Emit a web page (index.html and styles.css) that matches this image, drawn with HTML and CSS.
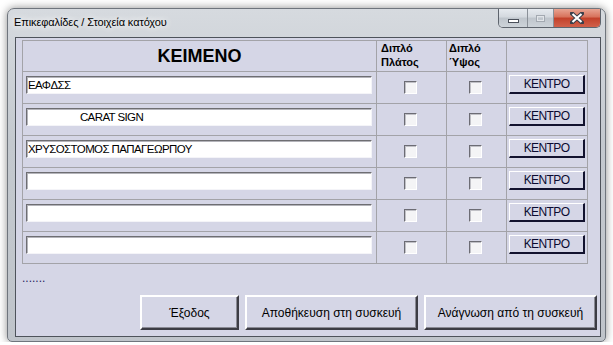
FILE: index.html
```html
<!DOCTYPE html>
<html lang="el">
<head>
    <meta charset="UTF-8">
    <title>Επικεφαλίδες / Στοιχεία κατόχου</title>
    <link rel="stylesheet" href="styles.css">
</head>
<body>
    <div class="window">
        <div class="titlebar">
            <span class="title">Επικεφαλίδες / Στοιχεία κατόχου</span>
            <div class="caption">
                <span class="cap cap-min"><i></i></span>
                <span class="cap cap-max"><i></i></span>
                <span class="cap cap-close">
                    <svg width="14" height="12" viewBox="0 0 14 12">
                        <path d="M2 1.5 L12 10.5 M12 1.5 L2 10.5" stroke="#3a3f4a" stroke-width="4.2" stroke-linecap="square"/>
                        <path d="M2.5 2 L11.5 10 M11.5 2 L2.5 10" stroke="#fff" stroke-width="2.2"/>
                    </svg>
                </span>
            </div>
        </div>

        <div class="client">
            <div class="grid">
                <div class="cell head-main">KEIMENO</div>
                <div class="cell head-small pad-w">Διπλό<br>Πλάτος</div>
                <div class="cell head-small pad-h">Διπλό<br>Ύψος</div>
                <div class="cell"></div>

                <div class="cell text-cell"><input class="field" type="text" value="ΕΑΦΔΣΣ"></div>
                <div class="cell check-cell"><span class="check"></span></div>
                <div class="cell check-cell"><span class="check"></span></div>
                <div class="cell btn-cell"><button class="center-btn">KENTPO</button></div>

                <div class="cell text-cell"><input class="field" type="text" value="                    CARAT SIGN"></div>
                <div class="cell check-cell"><span class="check"></span></div>
                <div class="cell check-cell"><span class="check"></span></div>
                <div class="cell btn-cell"><button class="center-btn">KENTPO</button></div>

                <div class="cell text-cell"><input class="field" type="text" value="ΧΡΥΣΟΣΤΟΜΟΣ ΠΑΠΑΓΕΩΡΠΟΥ"></div>
                <div class="cell check-cell"><span class="check"></span></div>
                <div class="cell check-cell"><span class="check"></span></div>
                <div class="cell btn-cell"><button class="center-btn">KENTPO</button></div>

                <div class="cell text-cell"><input class="field" type="text" value=""></div>
                <div class="cell check-cell"><span class="check"></span></div>
                <div class="cell check-cell"><span class="check"></span></div>
                <div class="cell btn-cell"><button class="center-btn">KENTPO</button></div>

                <div class="cell text-cell"><input class="field" type="text" value=""></div>
                <div class="cell check-cell"><span class="check"></span></div>
                <div class="cell check-cell"><span class="check"></span></div>
                <div class="cell btn-cell"><button class="center-btn">KENTPO</button></div>

                <div class="cell text-cell"><input class="field" type="text" value=""></div>
                <div class="cell check-cell"><span class="check"></span></div>
                <div class="cell check-cell"><span class="check"></span></div>
                <div class="cell btn-cell"><button class="center-btn">KENTPO</button></div>
            </div>

            <div class="dots">.......</div>

            <div class="actions">
                <button class="action-btn btn-exit">Έξοδος</button>
                <button class="action-btn btn-wide">Αποθήκευση στη συσκευή</button>
                <button class="action-btn btn-wide">Ανάγνωση από τη συσκευή</button>
            </div>
        </div>
    </div>
</body>
</html>
```

FILE: styles.css
```css
body {
    margin: 0;
    background: #ffffff;
    font-family: "Liberation Sans", Arial, sans-serif;
}
.window {
    box-sizing: border-box;
    width: 599px;
    height: 334px;
    margin: 8px 0 0 7px;
    padding: 0 4px 4px 7px;
    border: 1px solid #6f757d;
    border-radius: 7px 7px 5px 5px;
    background: linear-gradient(to bottom, #d6dadf 0%, #c4c9cf 40%, #bfc4ca 100%);
    box-shadow: 0 0 9px rgba(0, 0, 0, 0.45);
}
.titlebar {
    height: 28px;
    display: flex;
    align-items: flex-start;
}
.title {
    margin: 7px 0 0 -1px;
    font-family: "Liberation Sans", Arial, sans-serif;
    font-size: 11px;
    letter-spacing: -0.1px;
    color: #000;
    text-shadow: 0 0 6px #fff, 0 0 10px #fff;
}
.caption {
    margin-left: auto;
    display: flex;
    height: 18px;
    border: 1px solid #5e646d;
    border-top: none;
    border-radius: 0 0 5px 5px;
    overflow: hidden;
}
.cap {
    display: flex;
    align-items: center;
    justify-content: center;
    height: 18px;
}
.cap-min {
    width: 28px;
    border-right: 1px solid #8a9098;
    background: linear-gradient(to bottom, #e6eaef 0%, #d3d8de 45%, #bfc5cc 50%, #cdd3d9 100%);
}
.cap-min i {
    display: block;
    width: 9px;
    height: 2px;
    margin-top: 6px;
    background: #fff;
    border: 1px solid #4a505a;
}
.cap-max {
    width: 25px;
    border-right: 1px solid #8a9098;
    background: linear-gradient(to bottom, #e6eaef 0%, #d3d8de 45%, #bfc5cc 50%, #cdd3d9 100%);
}
.cap-max i {
    display: block;
    width: 7px;
    height: 5px;
    border: 1px solid #a3a9b1;
    box-shadow: inset 0 0 0 1px #e2e5e9;
}
.cap-close {
    width: 46px;
    background: linear-gradient(to bottom, #e8a492 0%, #d7715a 45%, #c2412a 50%, #d1604a 100%);
}
.client {
    box-sizing: border-box;
    height: 300px;
    padding: 2px 3px 0 6px;
    border: 1px solid #4e535b;
    background: #d5d6e6;
}
.grid {
    display: grid;
    grid-template-columns: 353px 69px 59px 80px;
    grid-template-rows: 30px repeat(6, 31px);
    gap: 1px;
    width: max-content;
    background: #a3a3a8;
    border: 1px solid #a3a3a8;
}
.cell {
    background: #d5d6e6;
    box-sizing: border-box;
}
.head-main {
    display: flex;
    align-items: center;
    justify-content: center;
    font-size: 18px;
    font-weight: bold;
    color: #000;
}
.head-small {
    font-size: 11px;
    font-weight: bold;
    line-height: 14px;
    color: #000;
}
.pad-w {
    padding-left: 4px;
}
.pad-h {
    padding-left: 2px;
}
.text-cell {
    padding: 4px 0 0 3px;
}
.field {
    box-sizing: border-box;
    display: block;
    width: 346px;
    height: 18px;
    margin: 0;
    padding: 0 1px;
    border: 1px solid;
    border-color: #6e6e72 #f4f4f8 #f4f4f8 #6e6e72;
    box-shadow: inset 1px 1px 0 #b4b4ba;
    background: #fff;
    font-family: "Liberation Sans", Arial, sans-serif;
    font-size: 11.5px;
    letter-spacing: -0.6px;
    color: #000;
    white-space: pre;
    outline: none;
}
.check-cell {
    display: flex;
    align-items: center;
    justify-content: center;
}
.check {
    box-sizing: border-box;
    display: block;
    width: 13px;
    height: 13px;
    margin-right: 2px;
    border: 1px solid;
    border-color: #6c6c74 #ffffff #ffffff #6c6c74;
    box-shadow: inset 1px 1px 0 #c0c0c6;
    background: #f4f4f6;
}
.btn-cell {
    padding: 3px 0 0 2px;
}
.center-btn {
    box-sizing: border-box;
    display: block;
    width: 76px;
    height: 19px;
    margin: 0;
    padding: 0;
    border-style: solid;
    border-width: 1px 2px 2px 1px;
    border-color: #ffffff #12122e #12122e #ffffff;
    background: #d5d6e6;
    font-family: "Liberation Sans", Arial, sans-serif;
    font-size: 12px;
    letter-spacing: -0.6px;
    color: #0a0a30;
}
.dots {
    margin: 7px 0 0 0;
    font-size: 12px;
    line-height: 14px;
    color: #2c1d5e;
}
.actions {
    display: flex;
    justify-content: flex-end;
    gap: 6px;
    margin-top: 10px;
}
.action-btn {
    box-sizing: border-box;
    height: 35px;
    margin: 0;
    padding: 0;
    border-style: solid;
    border-width: 2px;
    border-color: #ffffff #3c3c44 #3c3c44 #ffffff;
    box-shadow: inset -1px -1px 0 #8a8a94;
    background: #d5d6e6;
    font-family: "Liberation Sans", Arial, sans-serif;
    font-size: 12px;
    color: #000;
}
.btn-exit {
    width: 99px;
}
.btn-wide {
    width: 173px;
}
```
